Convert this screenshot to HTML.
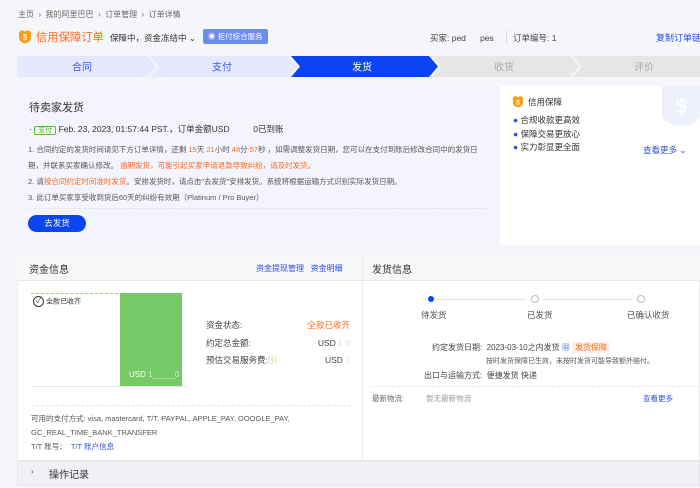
<!DOCTYPE html>
<html><head><meta charset="utf-8"><style>
*{margin:0;padding:0;box-sizing:border-box}
body{width:700px;height:488px;overflow:hidden;background:#f5f6f9;font-family:"Liberation Sans","Noto Sans CJK SC",sans-serif;color:#333;position:relative}
.a{position:absolute;white-space:nowrap}
.s{font-size:7.5px;color:#555}
.o{color:#ff6a1a}
.b{color:#2a4fe0}
</style></head><body>
<div class="a" style="left:18px;top:9px;font-size:8px;color:#666">主页 &nbsp;›&nbsp; 我的阿里巴巴 &nbsp;›&nbsp; 订单管理 &nbsp;›&nbsp; 订单详情</div>
<svg class="a" style="left:18px;top:29px" width="14" height="15" viewBox="0 0 14 15"><path d="M1 3 L4 1 L7 2.5 L10 1 L13 3 L13 9 Q13 13 7 14.5 Q1 13 1 9Z" fill="#f7a21b"/><text x="7" y="11" font-size="8" fill="#fff" text-anchor="middle" font-family="Liberation Sans">$</text></svg>
<div class="a" style="left:36px;top:29px;font-size:11.3px;color:#ff6a1a">信用保障订单</div>
<div class="a" style="left:110px;top:32px;font-size:8.5px;color:#333">保障中，资金冻结中 ⌄</div>
<div class="a" style="left:203px;top:29px;width:65px;height:15px;background:#6d8cf2;border-radius:2px;color:#fff;font-size:7.5px;line-height:15px;padding-left:5px">◉ 拒付综合服务</div>
<div class="a" style="left:430px;top:32px;font-size:8.5px;color:#444">买家: ped&nbsp;&nbsp;&nbsp;&nbsp;&nbsp;&nbsp;pes</div>
<div class="a" style="left:506px;top:30px;width:1px;height:14px;background:#ddd"></div>
<div class="a" style="left:513px;top:32px;font-size:8.5px;color:#444">订单编号: 1</div>
<div class="a" style="left:656px;top:31px;font-size:9px" ><span class="b">复制订单链</span></div>
<svg class="a" style="left:17px;top:56px" width="683" height="21">
<polygon points="0,0 130,0 139,10.5 130,21 0,21" fill="#e6e9fd"/>
<polygon points="133,0 271,0 280,10.5 271,21 133,21 142,10.5" fill="#e6e9fd"/>
<polygon points="274,0 412,0 421,10.5 412,21 274,21 283,10.5" fill="#0b45f2"/>
<polygon points="415,0 553,0 562,10.5 553,21 415,21 424,10.5" fill="#e6e6e6"/>
<polygon points="556,0 683,0 683,21 556,21 565,10.5" fill="#e6e6e6"/>
<g font-size="10" text-anchor="middle" font-family="Liberation Sans,Noto Sans CJK SC"><text x="65" y="14.5" fill="#3a5be8">合同</text><text x="205" y="14.5" fill="#3a5be8">支付</text><text x="345" y="14.5" fill="#fff">发货</text><text x="487" y="14.5" fill="#aaa">收货</text><text x="627" y="14.5" fill="#aaa">评价</text></g>
</svg>
<div class="a" style="left:17px;top:85px;width:483px;height:160px;background:#f3f4fe"></div>
<div class="a" style="left:500px;top:86px;width:200px;height:159px;background:#fff"></div>
<svg class="a" style="left:662px;top:86px" width="38" height="40"><path d="M0 0 L38 0 L38 28 Q38 38 19 40 Q0 38 0 28Z" fill="#eef0fb"/><text x="19" y="27" font-size="20" fill="#fff" text-anchor="middle">$</text></svg>
<div class="a" style="left:29px;top:99px;font-size:11px;color:#333">待卖家发货</div>
<div class="a" style="left:29px;top:123px;font-size:8.5px;color:#333">· <span style="border:1px solid #52c41a;color:#52c41a;font-size:7px;padding:0 3px;border-radius:2px">支付</span> Feb. 23, 2023, 01:57:44 PST.，订单金额USD <span style="color:#eee">1&nbsp;&nbsp;&nbsp;&nbsp;&nbsp;&nbsp;&nbsp;</span>0已到账</div>
<div class="a s" style="left:28px;top:142px;line-height:16px">1. 合同约定的发货时间请见下方订单详情，还剩 <span class="o">15</span>天 <span class="o">21</span>小时 <span class="o">48</span>分 <span class="o">57</span>秒 ，如需调整发货日期，您可以在支付到账后修改合同中的发货日<br>期，并联系买家确认修改。 <span class="o">逾期发货，可能引起买家申请退款导致纠纷，请及时发货。</span><br>2. 请<span class="o">按合同约定时间准时发货</span>。安排发货时，请点击"去发货"安排发货。系统将根据运输方式识别实际发货日期。<br>3. 此订单买家享受收到货后60天的纠纷有效期（Platinum / Pro Buyer）</div>
<div class="a" style="left:28px;top:208px;width:462px;border-top:1px dashed #e3e4f0"></div>
<div class="a" style="left:28px;top:215px;width:58px;height:17px;background:#0b45f2;border-radius:9px;color:#fff;font-size:8.5px;line-height:17px;text-align:center">去发货</div>
<svg class="a" style="left:512px;top:95px" width="12" height="13" viewBox="0 0 14 15"><path d="M1 3 L4 1 L7 2.5 L10 1 L13 3 L13 9 Q13 13 7 14.5 Q1 13 1 9Z" fill="#f7a21b"/><text x="7" y="11" font-size="8" fill="#fff" text-anchor="middle">$</text></svg>
<div class="a" style="left:528px;top:96px;font-size:8.5px;color:#333">信用保障</div>
<div class="a" style="left:513px;top:114px;font-size:8.5px;color:#333;line-height:13.5px"><span class="b">●</span> 合规收款更高效<br><span class="b">●</span> 保障交易更放心<br><span class="b">●</span> 实力彰显更全面</div>
<div class="a b" style="left:643px;top:144px;font-size:8.5px">查看更多 ⌄</div>
<div class="a" style="left:17px;top:253px;width:683px;height:208px;background:#fff;border:1px solid #ebecef"></div>
<div class="a" style="left:17px;top:253px;width:683px;height:28px;background:#f6f7f9;border-bottom:1px solid #e8e9ec"></div>
<div class="a" style="left:362px;top:253px;width:1px;height:208px;background:#e8e9ec"></div>
<div class="a" style="left:29px;top:261px;font-size:10px;color:#333">资金信息</div>
<div class="a b" style="left:256px;top:263px;font-size:8px">资金提现管理 &nbsp; 资金明细</div>
<div class="a" style="left:372px;top:261px;font-size:10px;color:#333">发货信息</div>
<div class="a" style="left:31px;top:293px;width:151px;border-top:1px dashed #8fd67a"></div>
<div class="a" style="left:31px;top:386px;width:156px;height:1px;background:#e5e5e5"></div>
<div class="a" style="left:120px;top:293px;width:62px;height:93px;background:#76c966"></div>
<div class="a" style="left:129px;top:370px;font-size:8px;color:#fff">USD <span style="color:#cfe9c8">1_____0</span></div>
<div class="a" style="left:33px;top:296px;font-size:7px;color:#333"><span style="display:inline-block;width:11px;height:11px;border:1px solid #333;border-radius:50%;text-align:center;line-height:9px;font-size:7px;vertical-align:middle">✓</span> 全款已收齐</div>
<div class="a" style="left:206px;top:317px;font-size:8.5px;color:#444;line-height:17.5px">资金状态:<br>约定总金额:<br>预估交易服务费:<span style="color:#52c41a">ⓘ</span></div>
<div class="a" style="left:306px;top:317px;font-size:8.5px;line-height:17.5px;color:#444;text-align:right;width:44px">
<span class="o">全款已收齐</span><br>USD <span style="color:#ddd">1 0</span><br>USD <span style="color:#ddd">2</span></div>
<div class="a" style="left:31px;top:405px;width:320px;border-top:1px dashed #e5e5e5"></div>
<div class="a s" style="left:31px;top:412px;line-height:14px">可用的支付方式: visa, mastercard, T/T, PAYPAL, APPLE_PAY, GOOGLE_PAY,<br>GC_REAL_TIME_BANK_TRANSFER<br>T/T 账号： &nbsp;<span class="b">T/T 账户信息</span></div>
<div class="a" style="left:428px;top:296px;width:6px;height:6px;border-radius:50%;background:#0b45f2"></div>
<div class="a" style="left:437px;top:299px;width:89px;height:1px;background:#e3e3e3"></div>
<div class="a" style="left:531px;top:295px;width:8px;height:8px;border-radius:50%;border:1px solid #bbb"></div>
<div class="a" style="left:543px;top:299px;width:89px;height:1px;background:#e3e3e3"></div>
<div class="a" style="left:637px;top:295px;width:8px;height:8px;border-radius:50%;border:1px solid #bbb"></div>
<div class="a" style="left:421px;top:309px;font-size:8.5px;color:#555">待发货</div>
<div class="a" style="left:527px;top:309px;font-size:8.5px;color:#555">已发货</div>
<div class="a" style="left:627px;top:309px;font-size:8.5px;color:#555">已确认收货</div>
<div class="a" style="left:432px;top:342px;font-size:8px;color:#444">约定发货日期: &nbsp;2023-03-10之内发货 <span class="b">▦</span> <span style="background:#fff0e6;color:#ff6a1a;padding:1px 3px">发货保障</span></div>
<div class="a" style="left:486px;top:356px;font-size:7px;color:#555">按时发货保障已生效，未按时发货可能导致额外赔付。</div>
<div class="a" style="left:424px;top:370px;font-size:8px;color:#444">出口与运输方式: &nbsp;便捷发货 快递</div>
<div class="a" style="left:372px;top:386px;width:328px;border-top:1px dashed #e8e8e8"></div>
<div class="a" style="left:372px;top:393px;font-size:7.5px;color:#666">最新物流: <span style="margin-left:20px;color:#999">暂无最新物流</span></div>
<div class="a b" style="left:643px;top:393px;font-size:7.5px">查看更多</div>
<div class="a" style="left:17px;top:461px;width:683px;height:25px;background:#f0f1f4;border:1px solid #e5e6ea"></div>
<div class="a" style="left:31px;top:467px;font-size:8px;color:#555">›</div>
<div class="a" style="left:49px;top:466px;font-size:10px;color:#333">操作记录</div>
</body></html>
